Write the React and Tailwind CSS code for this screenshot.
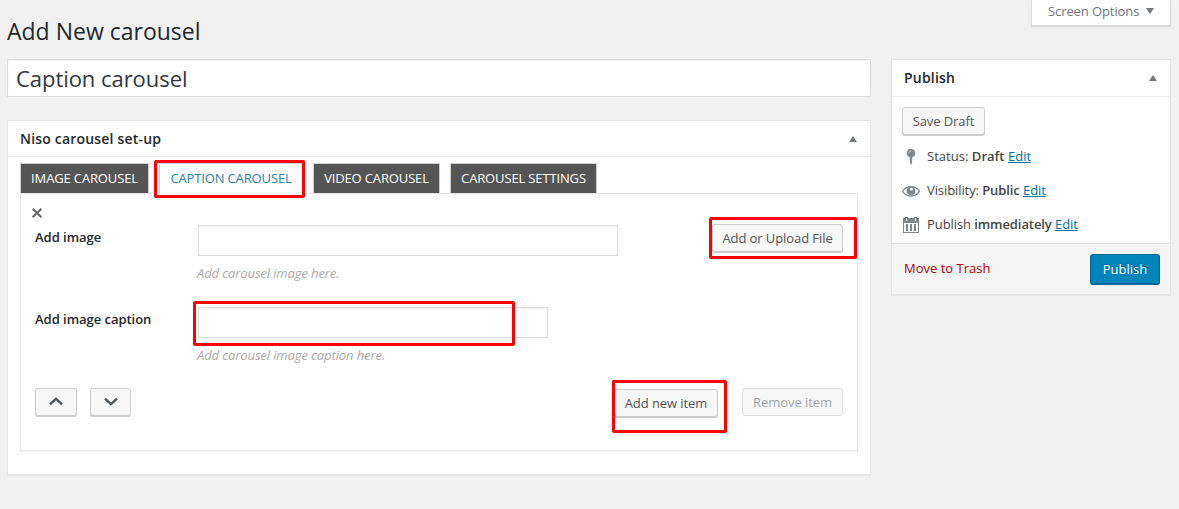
const BUTTON =
  'relative flex shrink-0 items-center justify-center rounded-[3px] border border-[#ccc] bg-[#f7f7f7] text-[13px] leading-none tracking-[-0.08px] text-[#555] shadow-[0_1px_0_#ccc]';
const FIELD =
  'block rounded-none border border-[#ddd] bg-white shadow-[inset_0_1px_2px_rgba(0,0,0,0.07)] outline-none';
const PANEL = 'flex flex-col border border-[#e5e5e5] bg-white shadow-[0_1px_1px_rgba(0,0,0,0.04)]';

function Highlight({ className }) {
  return (
    <span className={`pointer-events-none absolute z-10 rounded-[2px] border-[3px] border-[#ff0000] ${className}`} />
  );
}

function Triangle({ down = false, className = '' }) {
  return (
    <svg width="8" height="6" viewBox="0 0 8 6" className={className} fill="#72777c">
      <path d={down ? 'M0 0h8L4 6z' : 'M0 6h8L4 0z'} />
    </svg>
  );
}

function PanelHeader({ title, className }) {
  return (
    <div className={`flex shrink-0 items-center justify-between border-b border-[#eee] pr-[13px] pl-3 ${className}`}>
      <h2 className="text-[14px] leading-5 font-semibold tracking-[0.19px] text-[#23282d]">{title}</h2>
      <Triangle />
    </div>
  );
}

function Tab({ label, className, active = false, children }) {
  return (
    <div
      className={`relative flex items-center justify-center border-t border-r border-l border-[#d0d0d0] text-[13px] tracking-[-0.14px] ${
        active ? 'h-[31px] bg-white text-[#2683ae]' : 'h-[30px] bg-[#555] pt-px text-white'
      } ${className}`}
    >
      <span className="whitespace-nowrap">{label}</span>
      {children}
    </div>
  );
}

function Chevron({ up = false }) {
  return (
    <svg width="14" height="9" viewBox="0 0 14 9" className="mb-px" fill="none" stroke="#50575c" strokeWidth="2.3">
      <path d={up ? 'M1 7.4L7 1.8L13 7.4' : 'M1 1.6L7 7.2L13 1.6'} />
    </svg>
  );
}

function PinIcon() {
  return (
    <svg width="18" height="18" viewBox="0 0 18 18">
      <path d="M9 1a4.1 4.1 0 0 1 1.4 8L9.9 15 9 17.2 8.2 15l-.6-6A4.1 4.1 0 0 1 9 1z" fill="#82878c" />
      <path d="M7 5.2c0-1.3.8-2 1.9-2" fill="none" stroke="#d7d9db" strokeWidth="1" />
    </svg>
  );
}

function EyeIcon() {
  return (
    <svg width="18" height="18" viewBox="0 0 18 18">
      <path d="M.6 9.4C4.5 3 13.5 3 17.4 9.4 13.5 15.6 4.5 15.6.6 9.4z" fill="none" stroke="#82878c" strokeWidth="1.2" />
      <circle cx="9" cy="8.9" r="4.4" fill="#82878c" />
      <circle cx="9.4" cy="7.2" r="1.4" fill="#fff" />
    </svg>
  );
}

function CalendarIcon() {
  return (
    <svg width="18" height="18" viewBox="0 0 18 18" fill="#82878c">
      <path fillRule="evenodd" d="M1 2h2V1h3v1h6V1h3v1h2v15H1zM2 7v9h14V7zM4 2v3h1V2zM13 2v3h1V2z" />
      <path d="M4 8h2v7H4zM8 8h2v7H8zM12 8h2v7h-2z" />
    </svg>
  );
}

function PublishRow({ icon, label, value, className = '' }) {
  return (
    <div className={`flex h-[34px] items-center text-[13px] text-[#444] ${className}`}>
      {icon}
      <span className="ml-[7px] whitespace-nowrap">
        {label} <b className="font-semibold">{value}</b>{' '}
        <a className="text-[#0073aa] underline">Edit</a>
      </span>
    </div>
  );
}

function FieldRow({ label, hint, inputClass, className, children, mark }) {
  return (
    <div className={`flex items-start ${className}`}>
      <label className="mt-[3px] w-[163px] shrink-0 text-[13px] leading-[18px] font-semibold tracking-[-0.03px] text-[#23282d]">
        {label}
      </label>
      <div className="relative">
        <input className={`${FIELD} h-[31px] ${inputClass}`} />
        <p className="mt-[8px] -ml-px text-[13px] leading-[18px] tracking-[-0.11px] whitespace-nowrap text-[#aaa] italic">
          {hint}
        </p>
        {mark}
      </div>
      {children}
    </div>
  );
}

export default function App() {
  return (
    <div className="flex h-[509px] w-[1179px] gap-5 overflow-hidden bg-[#f1f1f1] pl-[7px] font-['Open_Sans',sans-serif] text-[#444]">
      <main className="w-[864px] shrink-0">
        <h1 className="flex h-[59px] items-center pt-[3px] text-[23px] leading-none text-[#23282d]">Add New carousel</h1>
        <input
          className={`${FIELD} h-[38px] w-full px-2 pb-px text-[22px] tracking-[-0.05px] text-[#32373c]`}
          defaultValue="Caption carousel"
        />
        <section className={`${PANEL} mt-[23px] h-[355px]`}>
          <PanelHeader title="Niso carousel set-up" className="h-9" />
          <div className="mx-3 pt-[6px]">
            <div className="flex h-[30px]">
              <Tab label="IMAGE CAROUSEL" className="w-[129px]" />
              <Tab label="CAPTION CAROUSEL" className="z-10 ml-[10px] w-[144px]" active>
                <Highlight className="-top-1 -left-[6px] h-[38px] w-[151px]" />
              </Tab>
              <Tab label="VIDEO CAROUSEL" className="ml-[10px] w-[127px]" />
              <Tab label="CAROUSEL SETTINGS" className="ml-[10px] w-[147px]" />
            </div>
            <div className="h-[258px] border border-[#e5e5e5] pr-[14px] pl-[14px] shadow-[0_1px_1px_rgba(0,0,0,0.04)]">
              <div className="flex h-[31px] items-start pt-[14px]">
                <svg width="10" height="10" viewBox="0 0 10 10" className="-ml-[3px]" stroke="#6b6b6b" strokeWidth="2.2">
                  <path d="M.6.8l8.8 8.4M9.4.8L.6 9.2" />
                </svg>
              </div>
              <FieldRow
                label="Add image"
                hint="Add carousel image here."
                inputClass="w-[420px]"
                className="h-[82px]"
              >
                <div className={`${BUTTON} -mt-px ml-auto h-[28px] w-[131px]`}>
                  Add or Upload File
                  <Highlight className="-top-[8px] -left-[4px] h-[42px] w-[148px]" />
                </div>
              </FieldRow>
              <FieldRow
                label="Add image caption"
                hint="Add carousel image caption here."
                inputClass="w-[350px]"
                className="h-[81px]"
                mark={<Highlight className="-top-[6px] -left-[5px] h-[45px] w-[322px]" />}
              />
              <div className="flex items-start">
                <div className={`${BUTTON} h-[28px] w-[42px]`}>
                  <Chevron up />
                </div>
                <div className={`${BUTTON} ml-[13px] h-[28px] w-[41px]`}>
                  <Chevron />
                </div>
                <div className={`${BUTTON} mt-px ml-auto h-[28px] w-[104px]`}>
                  Add new item
                  <Highlight className="-top-[10px] -left-[3px] h-[53px] w-[115px]" />
                </div>
                <div className="ml-6 flex h-[28px] w-[101px] items-center justify-center rounded-[3px] border border-[#ddd] bg-[#f7f7f7] text-[13px] leading-none tracking-[-0.05px] text-[#a0a5aa]">
                  Remove item
                </div>
              </div>
            </div>
          </div>
        </section>
      </main>

      <aside className="flex w-[280px] shrink-0 flex-col">
        <div className="flex h-[26px] w-[140px] items-center self-end border-r border-b border-l border-[#ddd] bg-white pb-[2px] pl-4 text-[13px] tracking-[-0.09px] text-[#72777c] shadow-[0_1px_1px_rgba(0,0,0,0.1)]">
          Screen Options
          <Triangle down className="mb-[2px] ml-[7px]" />
        </div>
        <section className={`${PANEL} mt-[33px] h-[236px]`}>
          <PanelHeader title="Publish" className="h-[37px]" />
          <div className="h-[146px] shrink-0 px-[10px] pt-[10px]">
            <div className={`${BUTTON} mb-[5px] h-[28px] w-[83px]`}>Save Draft</div>
            <PublishRow icon={<PinIcon />} label="Status:" value="Draft" className="tracking-[0.03px]" />
            <PublishRow icon={<EyeIcon />} label="Visibility:" value="Public" className="tracking-[-0.09px]" />
            <PublishRow icon={<CalendarIcon />} label="Publish" value="immediately" className="tracking-[-0.08px]" />
          </div>
          <footer className="flex flex-1 items-start justify-between border-t border-[#ddd] bg-[#f5f5f5] pt-[10px] pr-[10px] pl-3">
            <a className="mt-[5px] text-[13px] leading-[18px] text-[#b40000]">Move to Trash</a>
            <div className="flex h-[30px] w-[70px] items-center justify-center rounded-[3px] border border-[#006799] bg-[#0085ba] text-[13px] leading-none text-white shadow-[0_1px_0_#006799] [text-shadow:0_-1px_1px_#006799]">
              Publish
            </div>
          </footer>
        </section>
      </aside>
    </div>
  );
}
